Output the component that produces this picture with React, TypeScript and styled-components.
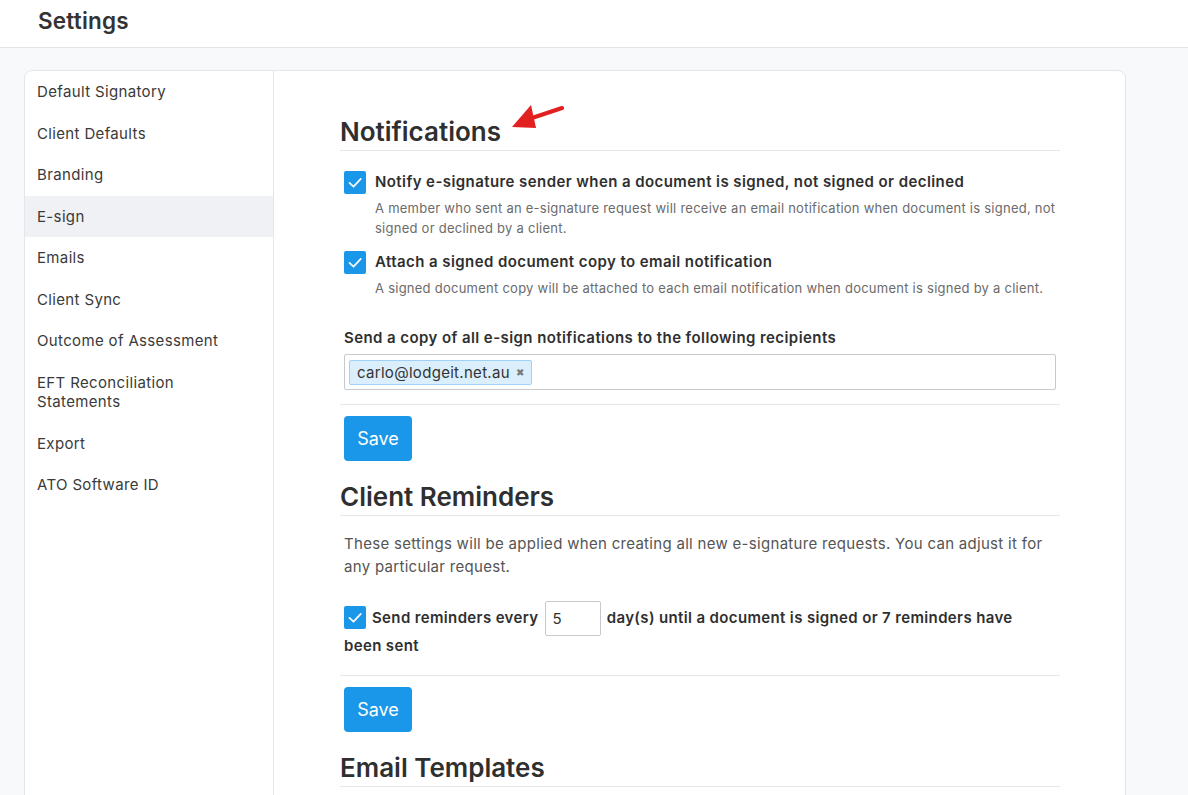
import React, { useState } from "react";
import styled, { createGlobalStyle } from "styled-components";

const GlobalStyle = createGlobalStyle`
  html, body {
    margin: 0;
    padding: 0;
    background: #f8f9fb;
    font-family: Inter, "Noto Sans", sans-serif;
    color: #333;
  }
  * { box-sizing: border-box; }
`;

const menu = [
  "Default Signatory",
  "Client Defaults",
  "Branding",
  "E-sign",
  "Emails",
  "Client Sync",
  "Outcome of Assessment",
  "EFT Reconciliation Statements",
  "Export",
  "ATO Software ID",
];

const Check = () => (
  <svg width="22" height="23" viewBox="0 0 22 23" fill="none">
    <path d="M5.5 11.8l4 3.8L16.8 7.8" stroke="#fff" strokeWidth="1.7" strokeLinecap="round" strokeLinejoin="round" />
  </svg>
);

const App: React.FC = () => {
  const [active] = useState("E-sign");
  const [days, setDays] = useState("5");

  return (
    <>
      <GlobalStyle />
      <Header>
        <PageTitle>Settings</PageTitle>
      </Header>
      <Page>
        <Card>
          <Sidebar>
            {menu.map((item) => (
              <MenuItem key={item} $active={item === active}>
                {item}
              </MenuItem>
            ))}
          </Sidebar>
          <Content>
            <Section>
              <HeadingRow>
                <SectionTitle>Notifications</SectionTitle>
                {/* red pointer arrow drawn on the screenshot */}
                <Arrow width="52" height="26" viewBox="0 0 52 26">
                  <path d="M50 3 L20 13" stroke="#e32020" strokeWidth="4" strokeLinecap="round" />
                  <path d="M0 22 L19 0 L24 23 Z" fill="#e32020" />
                </Arrow>
              </HeadingRow>
              <Option>
                <CheckBox>
                  <Check />
                </CheckBox>
                <div>
                  <OptionLabel>Notify e-signature sender when a document is signed, not signed or declined</OptionLabel>
                  <OptionHint>
                    A member who sent an e-signature request will receive an email notification when document is signed, not
                    signed or declined by a client.
                  </OptionHint>
                </div>
              </Option>
              <Option>
                <CheckBox>
                  <Check />
                </CheckBox>
                <div>
                  <OptionLabel>Attach a signed document copy to email notification</OptionLabel>
                  <OptionHint>
                    A signed document copy will be attached to each email notification when document is signed by a client.
                  </OptionHint>
                </div>
              </Option>
              <FieldLabel>Send a copy of all e-sign notifications to the following recipients</FieldLabel>
              <TagInput>
                <Tag>
                  carlo@lodgeit.net.au <TagClose>✖</TagClose>
                </Tag>
              </TagInput>
              <Divider />
              <SaveButton>Save</SaveButton>
            </Section>

            <Section>
              <SectionTitle>Client Reminders</SectionTitle>
              <Paragraph>
                These settings will be applied when creating all new e-signature requests. You can adjust it for any
                particular request.
              </Paragraph>
              <ReminderText>
                <CheckBox $inline>
                  <Check />
                </CheckBox>
                Send reminders every{" "}
                <DaysInput value={days} onChange={(e) => setDays(e.target.value)} /> day(s) until a document is signed
                or 7 reminders have been sent
              </ReminderText>
              <Divider $gap={16} />
              <SaveButton>Save</SaveButton>
            </Section>

            <Section>
              <SectionTitle>Email Templates</SectionTitle>
            </Section>
          </Content>
        </Card>
      </Page>
    </>
  );
};

export default App;

const Header = styled.header`
  height: 48px;
  background: #fff;
  border-bottom: 1px solid #e2e4e8;
  display: flex;
  align-items: center;
  padding-left: 38px;
`;

const PageTitle = styled.h1`
  margin: 0 0 7px;
  font-size: 22.5px;
  font-weight: 600;
  color: #333;
  letter-spacing: 0.2px;
`;

const Page = styled.div`
  padding: 22px 62px 0 24px;
  height: 747px;
  overflow: hidden;
`;

const Card = styled.div`
  display: flex;
  background: #fff;
  border: 1px solid #e4e6ea;
  border-radius: 8px;
  min-height: 760px;
`;

const Sidebar = styled.nav`
  width: 249px;
  flex-shrink: 0;
  border-right: 1px solid #e4e6ea;
`;

const MenuItem = styled.div<{ $active?: boolean }>`
  padding: 11px 12px;
  font-size: 15px;
  line-height: 19.5px;
  letter-spacing: 0.35px;
  color: #3a3a3a;
  background: ${(p) => (p.$active ? "#f0f1f4" : "transparent")};
`;

const Content = styled.div`
  flex: 1;
  padding: 45px 65px 0 66px;
  max-width: 854px;
`;

const Section = styled.section`
  margin-bottom: 20px;
`;

const HeadingRow = styled.div`
  position: relative;
`;

const Arrow = styled.svg`
  position: absolute;
  left: 172px;
  top: -11px;
`;

const SectionTitle = styled.h2`
  margin: 0 0 20px;
  padding-bottom: 2px;
  font-size: 26px;
  line-height: 32px;
  font-weight: 600;
  color: #2f2f2f;
  border-bottom: 1px solid #e4e6ea;
`;

const Option = styled.div`
  display: flex;
  gap: 9px;
  padding-left: 4px;
  margin-bottom: 13px;
`;

const CheckBox = styled.span<{ $inline?: boolean }>`
  display: inline-flex;
  align-items: center;
  justify-content: center;
  width: 22px;
  height: 23px;
  flex-shrink: 0;
  border-radius: 2px;
  background: #1a97e8;
  vertical-align: middle;
  margin-right: ${(p) => (p.$inline ? "6px" : "0")};
  margin-top: ${(p) => (p.$inline ? "-3px" : "0")};
`;

const OptionLabel = styled.div`
  font-size: 15px;
  font-weight: 600;
  line-height: 22px;
  letter-spacing: 0.42px;
  color: #2f2f2f;
`;

const OptionHint = styled.div`
  margin-top: 5px;
  font-size: 13px;
  line-height: 20px;
  letter-spacing: 0.25px;
  color: #6b6b6b;
`;

const FieldLabel = styled.div`
  margin: 30px 0 6px 4px;
  font-size: 15px;
  font-weight: 600;
  letter-spacing: 0.42px;
  color: #2f2f2f;
  line-height: 20px;
`;

const TagInput = styled.div`
  margin-left: 4px;
  width: 712px;
  height: 36px;
  border: 1px solid #c7c9cc;
  border-radius: 2px;
  padding: 5px 4px;
  display: flex;
  align-items: center;
`;

const Tag = styled.span`
  display: inline-flex;
  align-items: center;
  gap: 6px;
  height: 25px;
  padding: 0 7px;
  background: #daeefc;
  border: 1px solid #9ed1f5;
  border-radius: 2px;
  font-size: 15px;
  letter-spacing: 0.3px;
  color: #333;
`;

const TagClose = styled.span`
  font-size: 10px;
  color: #777;
`;

const Divider = styled.hr<{ $gap?: number }>`
  margin: ${(p) => p.$gap ?? 14}px 0 11px;
  border: none;
  border-top: 1px solid #e4e6ea;
`;

const SaveButton = styled.button`
  margin-left: 4px;
  width: 68px;
  height: 45px;
  border: none;
  border-radius: 4px;
  background: #1a97e8;
  color: #fff;
  font-family: Inter, "Noto Sans", sans-serif;
  font-size: 18px;
  cursor: pointer;
`;

const Paragraph = styled.p`
  margin: -4px 0 26px 4px;
  font-size: 15px;
  line-height: 23px;
  letter-spacing: 0.3px;
  color: #555;
  padding-right: 4px;
`;

const ReminderText = styled.div`
  margin-left: 4px;
  font-size: 15px;
  font-weight: 600;
  line-height: 27px;
  letter-spacing: 0.36px;
  color: #2f2f2f;
  padding-right: 40px;
`;

const DaysInput = styled.input`
  width: 56px;
  height: 35px;
  margin: -4px 2px;
  border: 1px solid #c7c9cc;
  border-radius: 2px;
  padding: 0 7px;
  font-family: Inter, "Noto Sans", sans-serif;
  font-size: 15px;
  color: #333;
  vertical-align: middle;
`;
